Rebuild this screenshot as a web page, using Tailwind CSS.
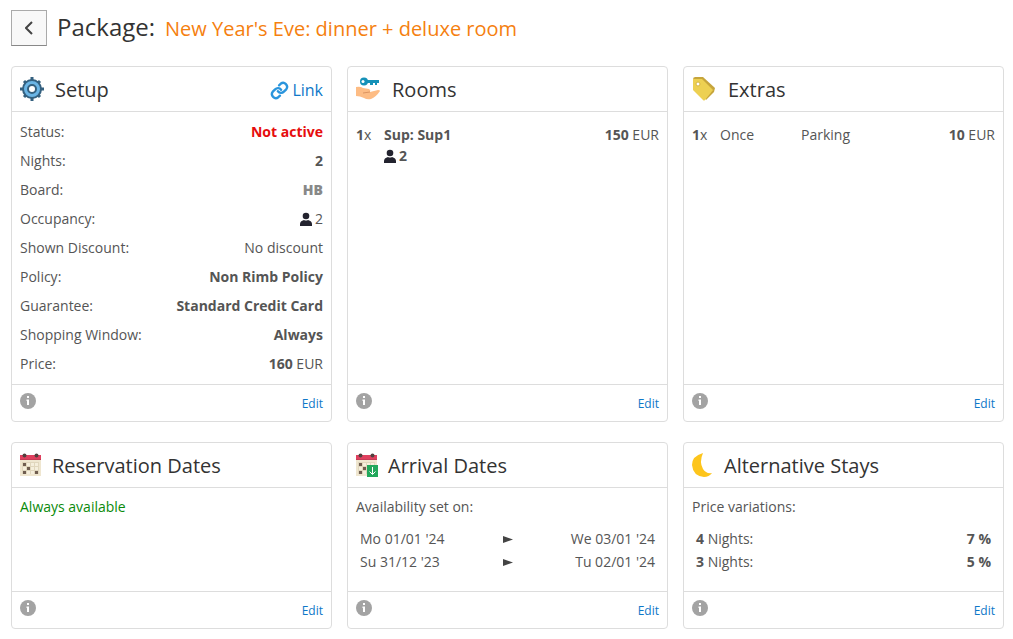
<!DOCTYPE html>
<html lang="en">
<head>
  <meta charset="UTF-8" />
  <meta name="viewport" content="width=device-width, initial-scale=1" />
  <title>Package: New Year's Eve</title>
  <script src="https://cdn.jsdelivr.net/npm/@tailwindcss/browser@4"></script>
</head>
<body class="bg-white text-[#555] text-sm font-['Open_Sans',sans-serif] pl-[11px] pr-[9px] py-2.5">

  <!-- shared icons -->
  <svg class="hidden" aria-hidden="true">
    <symbol id="i-info" viewBox="0 0 16 16">
      <circle cx="8" cy="8" r="8" fill="#a3a3a3" />
      <path d="M7 3h2v2H7zM6.500 6.500H9V12H7V8h-.5z" fill="#fff" />
    </symbol>
    <symbol id="i-user" viewBox="0 0 12 14">
      <circle cx="6" cy="4" r="3.300" fill="#23232f" />
      <path d="M0 14v-2q0-3 4-4 2 1 4 0 4 1 4 4v2z" fill="#23232f" />
    </symbol>
    <symbol id="i-arrow" viewBox="0 0 10 7">
      <path d="M0 0l10 3.500L0 7z" fill="#444" />
    </symbol>
    <symbol id="i-calendar" viewBox="0 0 22 24">
      <path d="M0 7h21v16H0z" fill="#efe6d0" />
      <path d="M0 2h21v5H0z" fill="#e0405f" />
      <path d="M0 6h21v1H0z" fill="#c73a55" />
      <circle cx="4.500" cy="2.500" r="2" fill="#52403f" />
      <circle cx="16.500" cy="2.500" r="2" fill="#52403f" />
      <path d="M2 9h17v12H2z" fill="#e0d6bd" />
      <path d="M7 10h3v3H7zM11 10h3v3h-3zM15 10h3v3h-3zM3 14h3v3H3zM11 14h3v3h-3zM15 14h3v3h-3zM7 18h3v3H7zM11 18h3v3h-3z" fill="#f5eedc" />
      <path d="M3 10h3v3H3zM7 14h3v3H7zM3 18h3v3H3zM15 18h3v3h-3z" fill="#6f5d50" />
    </symbol>
  </svg>

  <header class="flex items-center h-9 mb-5">
    <button type="button" aria-label="Back" class="flex items-center justify-center size-9 border border-[#aaa] border-b-[#888] bg-[#f8f8f8]">
      <svg class="w-2 h-3.5" viewBox="0 0 8 14" fill="none" stroke="#444" stroke-width="2"><path d="M7 1L1 7l6 6" /></svg>
    </button>
    <h1 class="flex items-baseline ml-2.5 text-2xl leading-9 text-[#333]">Package:
      <span class="ml-2.5 text-xl leading-9 text-[#f5800f]">New Year's Eve: dinner + deluxe room</span>
    </h1>
  </header>

  <main class="grid grid-cols-3 gap-x-[15px] gap-y-5">

    <section class="flex flex-col border border-[#ddd] rounded">
      <div class="flex items-center h-[45px] px-2 border-b border-[#ddd]">
        <svg class="size-6" viewBox="0 0 24 24">
          <path d="M12 0v24M0 12h24M4 4l16 16M20 4L4 20" stroke="#34607f" stroke-width="3" />
          <circle cx="12" cy="12" r="9" fill="#6bb5e5" stroke="#34607f" stroke-width="2" />
          <circle cx="12" cy="12" r="4" fill="#fff" stroke="#34607f" stroke-width="2" />
        </svg>
        <h2 class="ml-[11px] pt-0.5 text-xl text-[#333]">Setup</h2>
        <a href="#" class="ml-auto flex items-center gap-[3px] pt-0.5 text-base text-[#0f78c8]">
          <svg class="size-[19px]" viewBox="0 0 24 24" fill="none" stroke="#2a95dd" stroke-width="3" stroke-linecap="round" stroke-linejoin="round">
            <path d="M10 13a5 5 0 0 0 7.500.5l3-3a5 5 0 0 0-7-7l-2 2" />
            <path d="M14 11a5 5 0 0 0-7.500-.5l-3 3a5 5 0 0 0 7 7l2-2" />
          </svg>Link
        </a>
      </div>
      <dl class="grow px-2 pt-[5px] pb-1.5 leading-[29px]">
        <div class="flex justify-between"><dt>Status:</dt><dd class="font-bold text-[#e60d0d]">Not active</dd></div>
        <div class="flex justify-between"><dt>Nights:</dt><dd class="font-bold">2</dd></div>
        <div class="flex justify-between"><dt>Board:</dt><dd class="font-extrabold text-[#888]">HB</dd></div>
        <div class="flex justify-between"><dt>Occupancy:</dt><dd class="flex items-center gap-[3px]"><svg class="w-3 h-3.5"><use href="#i-user" /></svg>2</dd></div>
        <div class="flex justify-between"><dt>Shown Discount:</dt><dd>No discount</dd></div>
        <div class="flex justify-between"><dt>Policy:</dt><dd class="font-bold">Non Rimb Policy</dd></div>
        <div class="flex justify-between"><dt>Guarantee:</dt><dd class="font-bold">Standard Credit Card</dd></div>
        <div class="flex justify-between"><dt>Shopping Window:</dt><dd class="font-bold">Always</dd></div>
        <div class="flex justify-between"><dt>Price:</dt><dd><b>160</b> EUR</dd></div>
      </dl>
      <div class="flex justify-between items-start h-[37px] px-2 pt-2 border-t border-[#ddd]">
        <svg class="size-4"><use href="#i-info" /></svg>
        <a href="#" class="text-xs leading-[22px] text-[#0f78c8]">Edit</a>
      </div>
    </section>

    <section class="flex flex-col border border-[#ddd] rounded">
      <div class="flex items-center h-[45px] px-2 border-b border-[#ddd]">
        <svg class="size-6" viewBox="0 0 24 24">
          <path d="M8 3h15v3h-2v2h-2V6h-2v2h-3V6H8z" fill="#1591b8" />
          <circle cx="8" cy="4.500" r="4" fill="#1591b8" />
          <circle cx="7" cy="4.500" r="1.500" fill="#fff" />
          <path d="M0 10q4-1 7 1l6 1q2 1 1 3l8-2q2 0 2 1-4 6-9 8-4 1-7-1-4-2-8-2z" fill="#fdbc84" />
          <path d="M7 16l7-1" stroke="#dc9460" fill="none" />
        </svg>
        <h2 class="ml-3 pt-0.5 text-xl text-[#333]">Rooms</h2>
      </div>
      <div class="grow px-2 pt-3">
        <table class="w-full leading-[21px]">
          <tbody>
            <tr class="align-top">
              <td class="w-7"><b>1</b>x</td>
              <td class="font-bold">Sup: Sup1
                <div class="flex items-center gap-[3px]"><svg class="w-3 h-3.5"><use href="#i-user" /></svg>2</div>
              </td>
              <td class="text-right"><b>150</b> EUR</td>
            </tr>
          </tbody>
        </table>
      </div>
      <div class="flex justify-between items-start h-[37px] px-2 pt-2 border-t border-[#ddd]">
        <svg class="size-4"><use href="#i-info" /></svg>
        <a href="#" class="text-xs leading-[22px] text-[#0f78c8]">Edit</a>
      </div>
    </section>

    <section class="flex flex-col border border-[#ddd] rounded">
      <div class="flex items-center h-[45px] px-2 border-b border-[#ddd]">
        <svg class="size-6" viewBox="0 0 24 24">
          <path d="M1 1l2-1h8l12 11-1 4-8 8z" fill="#c6a53c" />
          <path d="M1 2h9l11 11-8 10q-1 1-2 0L1 13z" fill="#edd052" />
          <circle cx="6" cy="7" r="2" fill="#fff" stroke="#d5b542" />
        </svg>
        <h2 class="ml-3 pt-0.5 text-xl text-[#333]">Extras</h2>
      </div>
      <div class="grow px-2 pt-3">
        <table class="w-full leading-[21px]">
          <tbody>
            <tr>
              <td class="w-7"><b>1</b>x</td>
              <td class="w-[81px]">Once</td>
              <td>Parking</td>
              <td class="text-right"><b>10</b> EUR</td>
            </tr>
          </tbody>
        </table>
      </div>
      <div class="flex justify-between items-start h-[37px] px-2 pt-2 border-t border-[#ddd]">
        <svg class="size-4"><use href="#i-info" /></svg>
        <a href="#" class="text-xs leading-[22px] text-[#0f78c8]">Edit</a>
      </div>
    </section>

    <section class="flex flex-col border border-[#ddd] rounded">
      <div class="flex items-center h-[45px] px-2 border-b border-[#ddd]">
        <svg class="w-[22px] h-6"><use href="#i-calendar" /></svg>
        <h2 class="ml-2.5 pt-0.5 text-xl text-[#333]">Reservation Dates</h2>
      </div>
      <p class="grow px-2 pt-2 leading-[21px] text-[#0a8a0a]">Always available</p>
      <div class="flex justify-between items-start h-[37px] px-2 pt-2 border-t border-[#ddd]">
        <svg class="size-4"><use href="#i-info" /></svg>
        <a href="#" class="text-xs leading-[22px] text-[#0f78c8]">Edit</a>
      </div>
    </section>

    <section class="flex flex-col border border-[#ddd] rounded">
      <div class="flex items-center h-[45px] px-2 border-b border-[#ddd]">
        <svg class="w-[22px] h-6" viewBox="0 0 22 24">
          <use href="#i-calendar" width="22" height="24" />
          <path d="M11 12h11v12H11z" fill="#22a85c" />
          <path d="M16.500 14v7M13.500 18.500l3 3 3-3" stroke="#fff" fill="none" />
        </svg>
        <h2 class="ml-2.5 pt-0.5 text-xl text-[#333]">Arrival Dates</h2>
      </div>
      <div class="grow px-2 pt-2 pb-[18px]">
        <p class="leading-[21px]">Availability set on:</p>
        <table class="w-full mt-2.5 leading-[23px]">
          <tbody>
            <tr>
              <td class="pl-1">Mo 01/01 '24</td>
              <td><svg class="w-2.5 h-[7px] mx-auto mt-0.5"><use href="#i-arrow" /></svg></td>
              <td class="pr-1 text-right">We 03/01 '24</td>
            </tr>
            <tr>
              <td class="pl-1">Su 31/12 '23</td>
              <td><svg class="w-2.5 h-[7px] mx-auto mt-0.5"><use href="#i-arrow" /></svg></td>
              <td class="pr-1 text-right">Tu 02/01 '24</td>
            </tr>
          </tbody>
        </table>
      </div>
      <div class="flex justify-between items-start h-[37px] px-2 pt-2 border-t border-[#ddd]">
        <svg class="size-4"><use href="#i-info" /></svg>
        <a href="#" class="text-xs leading-[22px] text-[#0f78c8]">Edit</a>
      </div>
    </section>

    <section class="flex flex-col border border-[#ddd] rounded">
      <div class="flex items-center h-[45px] px-2 border-b border-[#ddd]">
        <svg class="w-[22px] h-6" viewBox="0 0 22 24">
          <path d="M11 0Q0 3 0 12q1 11 12 12 5 0 8-4-6 1-9-4Q7 9 11 0z" fill="#fdc51c" />
        </svg>
        <h2 class="ml-2.5 pt-0.5 text-xl text-[#333]">Alternative Stays</h2>
      </div>
      <div class="grow px-2 pt-2 pb-[18px]">
        <p class="leading-[21px]">Price variations:</p>
        <table class="w-full mt-2.5 leading-[23px]">
          <tbody>
            <tr><td class="pl-1"><b>4</b> Nights:</td><td class="pr-1 text-right font-bold">7 %</td></tr>
            <tr><td class="pl-1"><b>3</b> Nights:</td><td class="pr-1 text-right font-bold">5 %</td></tr>
          </tbody>
        </table>
      </div>
      <div class="flex justify-between items-start h-[37px] px-2 pt-2 border-t border-[#ddd]">
        <svg class="size-4"><use href="#i-info" /></svg>
        <a href="#" class="text-xs leading-[22px] text-[#0f78c8]">Edit</a>
      </div>
    </section>

  </main>
</body>
</html>
